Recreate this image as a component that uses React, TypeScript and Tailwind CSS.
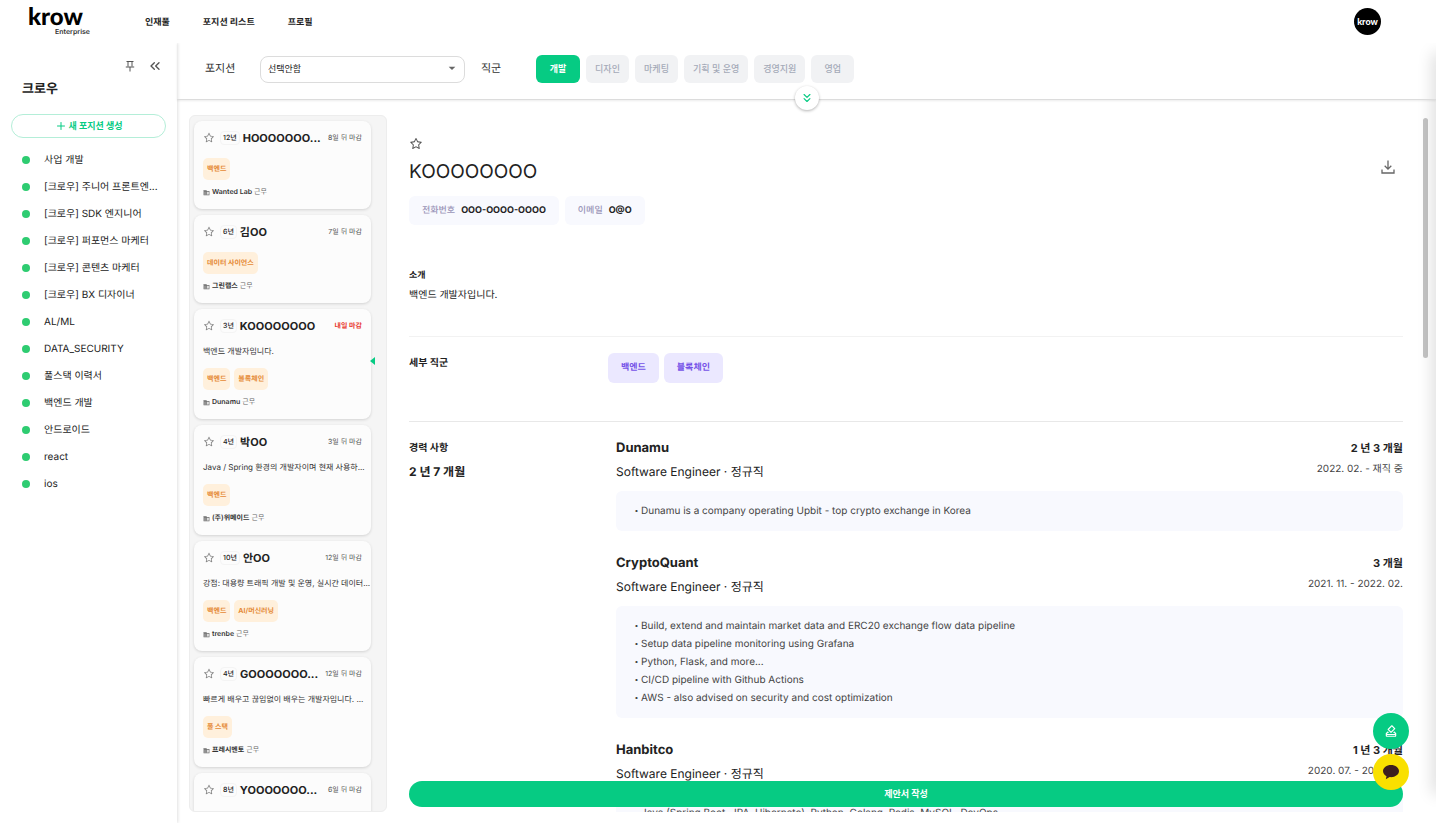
import { useState } from 'react'
import { AiOutlineStar } from 'react-icons/ai'
import { ChevronsDown, ChevronsLeft, Plus } from 'lucide-react'
import { MdArrowDropDown, MdBusiness, MdOutlineHowToVote } from 'react-icons/md'

const POSITIONS = [
  '사업 개발',
  '[크로우] 주니어 프론트엔...',
  '[크로우] SDK 엔지니어',
  '[크로우] 퍼포먼스 마케터',
  '[크로우] 콘텐츠 마케터',
  '[크로우] BX 디자이너',
  'AL/ML',
  'DATA_SECURITY',
  '풀스택 이력서',
  '백엔드 개발',
  '안드로이드',
  'react',
  'ios',
]

const JOB_GROUPS = ['개발', '디자인', '마케팅', '기획 및 운영', '경영지원', '영업']

type Candidate = {
  years: string
  name: string
  due: string
  urgent?: boolean
  intro?: string
  tags: string[]
  company: string
}

const CANDIDATES: Candidate[] = [
  { years: '12년', name: 'HOOOOOOO...', due: '8일 뒤 마감', tags: ['백엔드'], company: 'Wanted Lab' },
  { years: '6년', name: '김OO', due: '7일 뒤 마감', tags: ['데이터 사이언스'], company: '그린랩스' },
  { years: '3년', name: 'KOOOOOOOO', due: '내일 마감', urgent: true, intro: '백엔드 개발자입니다.', tags: ['백엔드', '블록체인'], company: 'Dunamu' },
  { years: '4년', name: '박OO', due: '3일 뒤 마감', intro: 'Java / Spring 환경의 개발자이며 현재 사용하...', tags: ['백엔드'], company: '(주)위메이드' },
  { years: '10년', name: '안OO', due: '12일 뒤 마감', intro: '강점: 대용량 트래픽 개발 및 운영, 실시간 데이터...', tags: ['백엔드', 'AI/머신러닝'], company: 'trenbe' },
  { years: '4년', name: 'GOOOOOOO...', due: '12일 뒤 마감', intro: '빠르게 배우고 끊임없이 배우는 개발자입니다. ...', tags: ['풀 스택'], company: '프레시멘토' },
  { years: '8년', name: 'YOOOOOOO...', due: '6일 뒤 마감', tags: [], company: '' },
]

const CAREERS = [
  {
    company: 'Dunamu',
    title: 'Software Engineer · 정규직',
    length: '2 년 3 개월',
    period: '2022. 02. - 재직 중',
    items: ['Dunamu is a company operating Upbit - top crypto exchange in Korea'],
  },
  {
    company: 'CryptoQuant',
    title: 'Software Engineer · 정규직',
    length: '3 개월',
    period: '2021. 11. - 2022. 02.',
    items: [
      'Build, extend and maintain market data and ERC20 exchange flow data pipeline',
      'Setup data pipeline monitoring using Grafana',
      'Python, Flask, and more...',
      'CI/CD pipeline with Github Actions',
      'AWS - also advised on security and cost optimization',
    ],
  },
  {
    company: 'Hanbitco',
    title: 'Software Engineer · 정규직',
    length: '1 년 3 개월',
    period: '2020. 07. - 2021. 10.',
    items: ['Java (Spring Boot, JPA, Hibernate), Python, Golang, Redis, MySQL, DevOps'],
  },
]

export default function App() {
  const [group, setGroup] = useState('개발')

  return (
    <div className="relative flex h-screen flex-col overflow-hidden bg-white font-['Inter','Noto_Sans_CJK_KR',sans-serif] text-[#222] [text-rendering:geometricPrecision]">
      <Header />
      <div className="flex min-h-0 flex-1">
        <Sidebar />
        <main className="flex min-w-0 flex-1 flex-col">
          {/* Filter bar */}
          <div className="relative z-10 flex h-[57px] shrink-0 items-center border-b border-[#dcdcdc] pb-[5px] pl-7 shadow-[0_1px_2px_rgba(0,0,0,0.08)]">
            <label htmlFor="position" className="w-[55px] text-[11px] text-[#333]">포지션</label>
            <div className="relative">
              <select
                id="position"
                className="h-[27px] w-[205px] appearance-none rounded-lg border border-[#dcdcdc] bg-white px-[7px] text-[9px] text-[#222]"
              >
                <option>선택안함</option>
              </select>
              <MdArrowDropDown className="pointer-events-none absolute top-1.5 right-[5px] size-4 text-[#666]" />
            </div>
            <span className="ml-4 w-[55px] text-[11px] text-[#333]">직군</span>
            <div className="flex gap-1.5">
              {JOB_GROUPS.map(g => (
                <button
                  key={g}
                  type="button"
                  onClick={() => setGroup(g)}
                  className={
                    g === group
                      ? 'h-7 min-w-11 rounded-md bg-[#06cb83] px-[9px] text-[9px] font-bold text-white'
                      : 'h-7 min-w-[43px] rounded-md bg-[#f1f2f4] px-[9px] text-[9px] font-medium text-[#a5aab8]'
                  }
                >
                  {g}
                </button>
              ))}
            </div>
            <button
              type="button"
              aria-label="펼치기"
              className="absolute -bottom-[11px] left-1/2 flex size-6 -translate-x-1/2 items-center justify-center rounded-full bg-white text-[#06cb83] shadow-[0_1px_3px_rgba(0,0,0,0.3)]"
            >
              <ChevronsDown className="size-3.5" />
            </button>
          </div>

          <div className="flex min-h-0 flex-1 pt-[15px] pb-[11px] pl-3">
            <div className="w-[198px] shrink-0 overflow-hidden rounded-md border border-[#ededed] bg-[#f5f5f5] py-[5px] pr-[15px] pl-1">
              <ul className="flex flex-col gap-1.5">
                {CANDIDATES.map(c => <CandidateCard key={c.name} candidate={c} />)}
              </ul>
            </div>
            <Profile />
            <div className="mr-2 w-[5px] shrink-0 pt-[3px]">
              <div className="h-[240px] rounded-full bg-[#c4c4c4]" />
            </div>
          </div>
        </main>
      </div>

      {/* Floating actions */}
      <div className="absolute right-[27px] bottom-[33px] z-20 flex flex-col gap-[5px]">
        <button type="button" aria-label="투표" className="flex size-9 items-center justify-center rounded-full bg-[#06cb83] text-white">
          <MdOutlineHowToVote className="size-3.5" />
        </button>
        <button type="button" aria-label="채팅" className="flex size-9 items-center justify-center rounded-full bg-[#f9e000]">
          <svg viewBox="0 0 18 16" className="h-4 w-[18px]" fill="#3c1e1e">
            <path d="M9 1C4.600 1 1 3.700 1 7.100c0 2.100 1.400 4 3.500 5.100L3.800 15.300l3.900-2.200c.4.1.9.1 1.300.1 4.400 0 8-2.700 8-6.100S13.400 1 9 1z" />
          </svg>
        </button>
      </div>
      {/* Shadow of the closed drawer */}
      <div className="pointer-events-none absolute top-14 -right-2 bottom-8 w-2 shadow-[0_0_16px_3px_rgba(0,0,0,0.15)]" />
    </div>
  )
}

function Header() {
  return (
    <header className="relative z-20 flex h-[43px] shrink-0 items-center bg-white pr-[55px] pl-7">
      <a href="#" className="flex w-[62px] flex-col pb-0.5 font-bold text-black">
        <span className="font-['Lato'] text-[24px] leading-[22px] font-black">krow</span>
        <span className="self-end text-[7px] leading-2 font-semibold text-[#333]">Enterprise</span>
      </a>
      <nav className="ml-[55px] flex gap-[33px] pt-0.5 text-[9px] font-bold">
        <a href="#">인재풀</a>
        <a href="#">포지션 리스트</a>
        <a href="#">프로필</a>
      </nav>
      <button type="button" className="ml-auto size-[27px] rounded-full bg-black font-['Lato'] text-[9px] leading-none font-black text-white">
        krow
      </button>
    </header>
  )
}

function Sidebar() {
  return (
    <aside className="z-10 w-[177px] shrink-0 px-[11px] pt-4 shadow-[1px_0_3px_rgba(0,0,0,0.12)]">
      <div className="flex h-3.5 items-center justify-end gap-[11px] pr-[3px] text-[#555]">
        <button type="button" aria-label="고정">
          <svg viewBox="0 0 12 12" className="size-3" fill="none" stroke="currentColor">
            <path d="M2.500 1.500h7M4 1.500v5M8 1.500v5M1.800 7h8.400M6 7v4.500" />
          </svg>
        </button>
        <button type="button" aria-label="접기"><ChevronsLeft className="size-4" /></button>
      </div>
      <h1 className="mt-1.5 pl-[11px] text-[13px] leading-5 font-bold">크로우</h1>
      <button
        type="button"
        className="mt-[15px] flex h-6 w-full items-center justify-center gap-0.5 rounded-full border border-[#b4eed8] text-[9px] font-bold text-[#06cb83]"
      >
        <Plus className="size-3" />
        새 포지션 생성
      </button>
      <ul className="mt-2">
        {POSITIONS.map(p => (
          <li key={p} className="flex h-[27px] items-center gap-3.5 pl-[11px] text-[10px]">
            <span className="size-2 shrink-0 rounded-full bg-[#2ecc71]" />
            <a href="#" className="leading-5 whitespace-nowrap">{p}</a>
          </li>
        ))}
      </ul>
    </aside>
  )
}

function CandidateCard({ candidate: c }: { candidate: Candidate }) {
  return (
    <li className="relative flex min-h-[88px] flex-col rounded-lg bg-[#fcfcfc] px-[9px] pt-[7px] pb-2.5 shadow-[0_1px_3px_rgba(0,0,0,0.14)]">
      <div className="flex h-5 items-center">
        <button type="button" aria-label="관심" className="shrink-0 text-[#888]">
          <AiOutlineStar className="size-3" />
        </button>
        <span className="ml-[5px] shrink-0 rounded-sm border border-[#f4f4f4] px-0.5 text-[7px] leading-3 font-medium">{c.years}</span>
        <strong className="ml-[3px] text-[11px] leading-5 font-bold whitespace-nowrap">{c.name}</strong>
        <span className={c.urgent ? 'ml-auto shrink-0 text-[7px] font-bold text-[#e8392f]' : 'ml-auto shrink-0 text-[7px] text-[#555]'}>
          {c.due}
        </span>
      </div>
      {c.intro && <p className="mt-2 text-[8px] leading-[14px] whitespace-nowrap text-[#333]">{c.intro}</p>}
      {c.tags.length > 0 && (
        <div className="mt-2.5 flex gap-1">
          {c.tags.map(t => (
            <span key={t} className="rounded-[5px] bg-[#fff0dc] px-1 text-[7px] leading-[22px] font-bold text-[#e58a35]">{t}</span>
          ))}
        </div>
      )}
      {c.company && (
        <p className="mt-[5px] flex items-center gap-0.5 text-[7px] leading-[14px] text-[#666]">
          <MdBusiness className="size-[7px]" />
          <span className="font-semibold text-[#333]">{c.company}</span>
          근무
        </p>
      )}
      {c.urgent && (
        <span className="absolute top-12 -right-1 h-0 w-0 border-y-4 border-r-[5px] border-y-transparent border-r-[#06cb83]" />
      )}
    </li>
  )
}

function Profile() {
  return (
    <section className="relative mr-5 ml-[22px] min-w-0 flex-1 overflow-hidden">
      <div className="flex items-start justify-between pt-[22px]">
        <div>
          <button type="button" aria-label="관심" className="block text-[#555]">
            <AiOutlineStar className="size-3.5" />
          </button>
          <h2 className="mt-[7px] text-[19px] leading-7">KOOOOOOOO</h2>
        </div>
        <button type="button" aria-label="다운로드" className="mt-[23px] mr-2 text-[#666]">
          <svg viewBox="0 0 14 14" className="size-3.5" fill="none" stroke="currentColor" strokeWidth="1.3">
            <path d="M7 .5v8.500M3.700 5.800 7 9.100l3.300-3.300M1 9.500v3.500h12V9.500" />
          </svg>
        </button>
      </div>
      <div className="mt-2.5 flex gap-1.5 text-[9px] leading-[29px] font-bold">
        <span className="rounded-md bg-[#f8f9fe] px-[13px]">
          <span className="mr-1.5 font-medium text-[#9a95b8]">전화번호</span>OOO-OOOO-OOOO
        </span>
        <span className="rounded-md bg-[#f8f9fe] px-[13px]">
          <span className="mr-1.5 font-medium text-[#9a95b8]">이메일</span>O@O
        </span>
      </div>

      <h3 className="mt-[43px] text-[9px] leading-4 font-bold">소개</h3>
      <p className="mt-0.5 text-[10px] leading-[18px]">백엔드 개발자입니다.</p>

      <div className="mt-8 flex h-[85px] border-t border-[#f2f2f2] pt-4">
        <h3 className="w-[199px] text-[10px] leading-5 font-bold">세부 직군</h3>
        <div className="flex h-[30px] gap-[5px] text-[9px] leading-[30px] font-bold text-[#7553e8]">
          <span className="rounded-md bg-[#ebe8ff] px-[13px]">백엔드</span>
          <span className="rounded-md bg-[#ebe8ff] px-[13px]">블록체인</span>
        </div>
      </div>

      <div className="flex border-t border-[#e8e8e8] pt-4">
        <div className="w-[207px] shrink-0 font-bold">
          <h3 className="text-[10px] leading-5">경력 사항</h3>
          <p className="mt-1 text-[12px] leading-5">2 년 7 개월</p>
        </div>
        <ul className="flex flex-1 flex-col gap-[22px]">
          {CAREERS.map(c => (
            <li key={c.company}>
              <div className="flex justify-between">
                <div>
                  <h4 className="text-[13px] leading-5 font-bold">{c.company}</h4>
                  <p className="mt-1 text-[12px] leading-5">{c.title}</p>
                </div>
                <div className="text-right">
                  <p className="text-[11px] leading-5 font-bold">{c.length}</p>
                  <p className="mt-px text-[10px] leading-5 text-[#444]">{c.period}</p>
                </div>
              </div>
              <ul className="mt-[9px] rounded-md bg-[#f8f9fe] px-4 py-[11px] text-[10px] leading-[18px] text-[#444]">
                {c.items.map(item => (
                  <li key={item} className="flex">
                    <span className="w-[9px] text-center text-[7px]">•</span>
                    {item}
                  </li>
                ))}
              </ul>
            </li>
          ))}
        </ul>
      </div>

      <button type="button" className="absolute inset-x-0 bottom-[5px] h-[26px] rounded-full bg-[#06cb83] text-[9px] font-bold text-white">
        제안서 작성
      </button>
    </section>
  )
}
